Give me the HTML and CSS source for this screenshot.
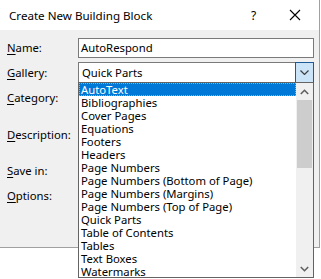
FILE: index.html
```
<!DOCTYPE html>
<html>
<head>
<meta charset="utf-8">
<link rel="stylesheet" href="styles.css">
</head>
<body>
<div class="dialog">
  <div class="titlebar">
    <span class="title">Create New Building Block</span>
    <span class="help">?</span>
    <span class="close"><svg width="12" height="12" viewBox="0 0 12 12"><path d="M1 1L11 11M11 1L1 11" stroke="#000" stroke-width="1.1" fill="none"/></svg></span>
  </div>
  <div class="body">
    <div class="row r-name">
      <label class="lbl"><u>N</u>ame:</label>
      <div class="textbox">AutoRespond</div>
    </div>
    <div class="row r-gallery">
      <label class="lbl"><u>G</u>allery:</label>
      <div class="combo">
        <span class="combo-text">Quick Parts</span>
        <span class="combo-btn"><svg width="9" height="5" viewBox="0 0 9 5"><path d="M0.5 0.5L4.5 4.5L8.5 0.5" stroke="#404040" stroke-width="1.2" fill="none"/></svg></span>
        <div class="list">
          <div class="items">
            <div class="item sel">AutoText</div>
            <div class="item">Bibliographies</div>
            <div class="item">Cover Pages</div>
            <div class="item">Equations</div>
            <div class="item">Footers</div>
            <div class="item">Headers</div>
            <div class="item">Page Numbers</div>
            <div class="item">Page Numbers (Bottom of Page)</div>
            <div class="item">Page Numbers (Margins)</div>
            <div class="item">Page Numbers (Top of Page)</div>
            <div class="item">Quick Parts</div>
            <div class="item">Table of Contents</div>
            <div class="item">Tables</div>
            <div class="item">Text Boxes</div>
            <div class="item">Watermarks</div>
          </div>
          <div class="scrollbar">
            <div class="arrow"><svg width="9" height="6" viewBox="0 0 9 6"><path d="M0.8 5L4.5 1.3L8.2 5" stroke="#606060" stroke-width="1.6" fill="none"/></svg></div>
            <div class="track"><div class="thumb"></div></div>
            <div class="arrow"><svg width="9" height="6" viewBox="0 0 9 6"><path d="M0.8 1L4.5 4.7L8.2 1" stroke="#606060" stroke-width="1.6" fill="none"/></svg></div>
          </div>
        </div>
      </div>
    </div>
    <div class="row r-cat"><label class="lbl"><u>C</u>ategory:</label></div>
    <div class="row r-desc"><label class="lbl"><u>D</u>escription:</label></div>
    <div class="row r-save"><label class="lbl"><u>S</u>ave in:</label></div>
    <div class="row r-opt"><label class="lbl"><u>O</u>ptions:</label></div>
  </div>
</div>
</body>
</html>
```

FILE: styles.css
```
html, body {
  margin: 0;
  padding: 0;
  background: #ffffff;
}
html {
  height: 279px;
}
body {
  min-height: 279px;
  font-family: "Noto Sans", "Open Sans", sans-serif;
  font-size: 11.3px;
  color: #000;
}
.dialog {
  width: 319px;
  height: 247px;
  background: #f0f0f0;
  border-right: 1px solid #a0a0a0;
  border-bottom: 1px solid #a0a0a0;
  display: flex;
  flex-direction: column;
}
.titlebar {
  height: 30px;
  background: #ffffff;
  display: flex;
  align-items: center;
  padding-left: 9px;
  flex-shrink: 0;
  font-size: 11.6px;
}
.title {
  flex: 1;
}
.help {
  width: 10px;
  margin-right: 28px;
  font-size: 12px;
}
.close {
  display: flex;
  margin-right: 18px;
}
.body {
  display: flex;
  flex-direction: column;
  padding: 8px 0 0 7px;
}
.row {
  display: flex;
  align-items: center;
}
.lbl {
  width: 71px;
  line-height: 14px;
}
.lbl u {
  text-decoration-thickness: 1px;
  text-underline-offset: 2px;
}
.r-name { height: 20px; }
.r-gallery { height: 21px; margin-top: 4px; }
.r-cat { height: 20px; margin-top: 5px; }
.r-desc { height: 20px; margin-top: 17px; }
.r-save { height: 20px; margin-top: 16px; }
.r-opt { height: 20px; margin-top: 5px; }
.textbox {
  width: 232px;
  height: 18px;
  border: 1px solid #7a7a7a;
  background: #fff;
  padding-left: 2px;
  line-height: 18px;
}
.combo {
  position: relative;
  width: 231px;
  height: 19px;
  border: 1px solid #7a7a7a;
  background: #fff;
  padding-left: 3px;
  line-height: 19px;
  display: flex;
}
.combo-text { flex: 1; }
.combo-btn {
  position: absolute;
  right: -1px;
  top: -1px;
  width: 17px;
  height: 19px;
  border: 1px solid #1c5a98;
  background: #cce4f7;
  display: flex;
  align-items: center;
  justify-content: center;
}
.list {
  position: absolute;
  left: -1px;
  top: 19px;
  width: 234px;
  height: 194px;
  border: 1px solid #646464;
  background: #fff;
  display: flex;
  line-height: 13px;
}
.items {
  flex: 1;
  display: flex;
  flex-direction: column;
}
.item {
  height: 13px;
  line-height: 13px;
  padding-left: 2px;
  white-space: nowrap;
}
.item.sel {
  background: #0078d7;
  color: #fff;
  outline: 1px dotted #ff9a3c;
  outline-offset: -1px;
}
.scrollbar {
  width: 17px;
  background: #f0f0f0;
  display: flex;
  flex-direction: column;
}
.arrow {
  height: 17px;
  display: flex;
  align-items: center;
  justify-content: center;
}
.track {
  flex: 1;
  padding: 0 1px;
}
.thumb {
  height: 68px;
  background: #cdcdcd;
}
```
